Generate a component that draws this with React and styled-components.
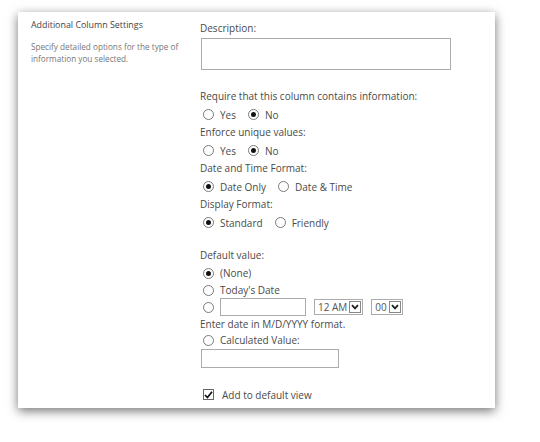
import styled, { createGlobalStyle } from "styled-components";

const GlobalStyle = createGlobalStyle`
  html, body {
    margin: 0;
    padding: 0;
    background: #ffffff;
  }
  body {
    font-family: "Open Sans", "Noto Sans", sans-serif;
    color: #4a4a4a;
  }
`;

const Page = styled.div`
  padding: 12px 0 0 18px;
  width: 540px;
  height: 442px;
  box-sizing: border-box;
`;

const Card = styled.div`
  width: 477px;
  height: 396px;
  background: #ffffff;
  box-shadow: 0 3px 10px rgba(0, 0, 0, 0.55);
  display: grid;
  grid-template-columns: 169px 1fr;
  padding-left: 13px;
  box-sizing: border-box;
`;

const Side = styled.div`
  padding-top: 6px;
`;

const SideTitle = styled.div`
  font-size: 8.9px;
  line-height: 14px;
  color: #444;
`;

const SideText = styled.div`
  margin-top: 9px;
  width: 155px;
  font-size: 8.2px;
  line-height: 12px;
  color: #777;
`;

const Main = styled.div`
  padding-top: 8px;
  display: flex;
  flex-direction: column;
`;

const Label = styled.div`
  font-size: 10px;
  line-height: ${(p) => p.$h || 17}px;
  height: ${(p) => p.$h || 17}px;
  margin-top: ${(p) => p.$mt || 0}px;
  white-space: nowrap;
`;

const TextBox = styled.div`
  margin-top: ${(p) => p.$mt ?? 1}px;
  margin-left: 1px;
  width: ${(p) => p.$w}px;
  height: ${(p) => p.$hh}px;
  border: 1px solid #ababab;
  box-sizing: border-box;
  background: #fff;
`;

const Row = styled.div`
  display: flex;
  align-items: center;
  height: ${(p) => p.$h || 19}px;
  margin-top: ${(p) => p.$mt || 0}px;
  padding-left: 3px;
  font-size: 10px;
  white-space: nowrap;
`;

const Option = styled.label`
  display: flex;
  align-items: center;
  margin-right: ${(p) => p.$gap ?? 12}px;
`;

const RadioCircle = styled.span`
  width: 11px;
  height: 11px;
  border: 1px solid #7a7a7a;
  border-radius: 50%;
  box-sizing: border-box;
  display: flex;
  align-items: center;
  justify-content: center;
  margin-right: ${(p) => (p.$bare ? 5 : 6)}px;
  flex-shrink: 0;

  &::after {
    content: "";
    width: 5px;
    height: 5px;
    border-radius: 50%;
    background: ${(p) => (p.$on ? "#111" : "transparent")};
  }
`;

const Radio = ({ on, children, gap }) => (
  <Option $gap={gap}>
    <RadioCircle $on={on} $bare={!children} />
    {children}
  </Option>
);

const Select = styled.div`
  display: flex;
  align-items: center;
  height: 16px;
  border: 1px solid #ababab;
  box-sizing: border-box;
  margin-left: ${(p) => p.$ml}px;
  font-size: 10px;
  color: #555;
`;

const SelectText = styled.span`
  padding: 0 2px 0 3px;
  line-height: 14px;
`;

const Arrow = styled.span`
  width: 12px;
  height: 12px;
  border: 1px solid #888;
  box-sizing: border-box;
  display: flex;
  align-items: center;
  justify-content: center;
  margin-right: 1px;
  background: #fff;
`;

const Chevron = () => (
  <svg width="8" height="6" viewBox="0 0 8 6">
    <path d="M1 1.2 L4 4.4 L7 1.2" fill="none" stroke="#222" strokeWidth="1.8" />
  </svg>
);

const CheckBox = styled.span`
  width: 11px;
  height: 11px;
  border: 1px solid #666;
  box-sizing: border-box;
  display: flex;
  align-items: center;
  justify-content: center;
  margin-right: 8px;
`;

export default function App() {
  return (
    <>
      <GlobalStyle />
      <Page>
        <Card>
          <Side>
            <SideTitle>Additional Column Settings</SideTitle>
            <SideText>
              Specify detailed options for the type of information you selected.
            </SideText>
          </Side>
          <Main>
            <Label>Description:</Label>
            <TextBox $w={250} $hh={32} />

            <Label $mt={18}>Require that this column contains information:</Label>
            <Row>
              <Radio>Yes</Radio>
              <Radio on>No</Radio>
            </Row>
            <Label>Enforce unique values:</Label>
            <Row>
              <Radio>Yes</Radio>
              <Radio on>No</Radio>
            </Row>
            <Label>Date and Time Format:</Label>
            <Row>
              <Radio on>Date Only</Radio>
              <Radio>Date &amp; Time</Radio>
            </Row>
            <Label>Display Format:</Label>
            <Row>
              <Radio on>Standard</Radio>
              <Radio>Friendly</Radio>
            </Row>

            <Label $mt={15}>Default value:</Label>
            <Row $h={18}>
              <Radio on>(None)</Radio>
            </Row>
            <Row $h={16}>
              <Radio>Today's Date</Radio>
            </Row>
            <Row $h={18}>
              <Radio gap={0} />
              <TextBox $w={86} $hh={18} $mt={0} />
              <Select $ml={8}>
                <SelectText>12 AM</SelectText>
                <Arrow>
                  <Chevron />
                </Arrow>
              </Select>
              <Select $ml={8}>
                <SelectText>00</SelectText>
                <Arrow>
                  <Chevron />
                </Arrow>
              </Select>
            </Row>
            <Label $h={16}>Enter date in M/D/YYYY format.</Label>
            <Row $h={16}>
              <Radio>Calculated Value:</Radio>
            </Row>
            <TextBox $w={138} $hh={19} />

            <Row $h={19} $mt={17}>
              <CheckBox>
                <svg width="9" height="8" viewBox="0 0 9 8">
                  <path d="M1 4 L3.4 6.5 L8 0.8" fill="none" stroke="#111" strokeWidth="1.7" />
                </svg>
              </CheckBox>
              Add to default view
            </Row>
          </Main>
        </Card>
      </Page>
    </>
  );
}
